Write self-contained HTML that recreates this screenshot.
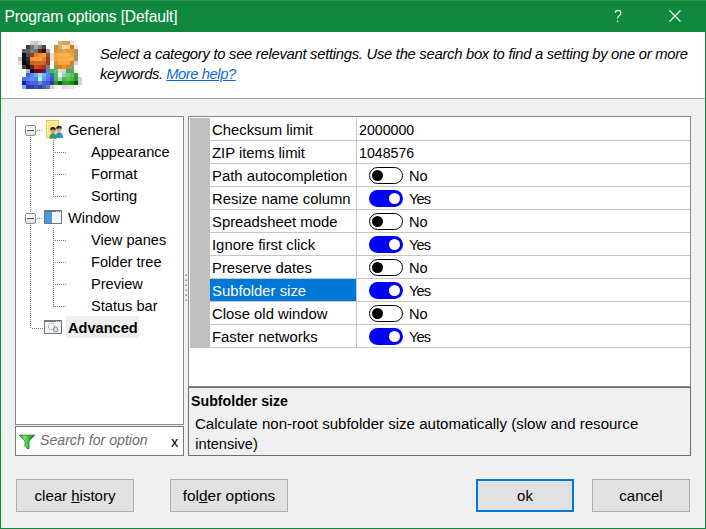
<!DOCTYPE html>
<html><head><meta charset="utf-8">
<style>
*{margin:0;padding:0;box-sizing:border-box}
html,body{width:706px;height:529px;overflow:hidden;background:#f0f0f0;font-family:"Liberation Sans",sans-serif;color:#000}
.a{position:absolute}
.t{position:absolute;white-space:nowrap;font-size:15px;line-height:18px}
#win{position:absolute;left:0;top:0;width:706px;height:529px;border:1px solid #10893e;border-top:none;background:#f0f0f0}
#title{position:absolute;left:0;top:0;width:706px;height:32px;background:#10893e;border-top:1px solid #2b9152}
#hdr{position:absolute;left:1px;top:32px;width:704px;height:67px;background:#fff;border-bottom:1px solid #a0a0a0}
.box{position:absolute;border:1px solid #828790;background:#fff}
.btn{position:absolute;border:1px solid #adadad;background:#e1e1e1;height:33px;font-size:15px;text-align:center;line-height:31px}
.row{position:absolute;left:210px;width:480px;height:1px;background:#c6c6c6}
.lbl{position:absolute;left:212px;font-size:14.85px;white-space:nowrap;line-height:15px}
.val{position:absolute;left:359px;font-size:14.2px;white-space:nowrap;line-height:15px}
.yn{position:absolute;left:409px;font-size:14.6px;white-space:nowrap;line-height:15px}
.tg{position:absolute;left:369px;width:34px;height:17px;border-radius:9px}
.off{border:1.4px solid #000;background:#fff}
.off::after{content:"";position:absolute;left:1.6px;top:1.9px;width:11px;height:11px;border-radius:50%;background:#000}
.on{background:#0000ff}
.on::after{content:"";position:absolute;left:20px;top:3px;width:11px;height:11px;border-radius:50%;background:#fff}
.ti{position:absolute;font-size:14.6px;white-space:nowrap;line-height:15px}
</style></head><body>
<div id="win"></div>
<div id="title"></div>
<div class="t" style="left:4.5px;top:9.2px;color:#fff;font-size:15.6px;letter-spacing:-0.16px;line-height:15px">Program options [Default]</div>
<div id="hdr"></div>
<svg class="a" style="left:18px;top:41px" width="64" height="48" shape-rendering="crispEdges"><rect x="12" y="0" width="4" height="4" fill="#d4d4d4"/><rect x="16" y="0" width="4" height="4" fill="#c4c4c4"/><rect x="20" y="0" width="4" height="4" fill="#e4e4e4"/><rect x="40" y="0" width="4" height="4" fill="#d8b070"/><rect x="44" y="0" width="4" height="4" fill="#d4a860"/><rect x="48" y="0" width="4" height="4" fill="#cca860"/><rect x="52" y="0" width="4" height="4" fill="#e8e8e0"/><rect x="8" y="4" width="4" height="4" fill="#404040"/><rect x="12" y="4" width="4" height="4" fill="#707070"/><rect x="16" y="4" width="4" height="4" fill="#a8a8a8"/><rect x="20" y="4" width="4" height="4" fill="#808080"/><rect x="24" y="4" width="4" height="4" fill="#404848"/><rect x="36" y="4" width="4" height="4" fill="#c09040"/><rect x="40" y="4" width="4" height="4" fill="#d8b070"/><rect x="44" y="4" width="4" height="4" fill="#f8d8a8"/><rect x="48" y="4" width="4" height="4" fill="#f0d0a0"/><rect x="52" y="4" width="4" height="4" fill="#d07818"/><rect x="56" y="4" width="4" height="4" fill="#e8e8e8"/><rect x="4" y="8" width="4" height="4" fill="#606060"/><rect x="8" y="8" width="4" height="4" fill="#606060"/><rect x="12" y="8" width="4" height="4" fill="#808080"/><rect x="16" y="8" width="4" height="4" fill="#5a7a8a"/><rect x="20" y="8" width="4" height="4" fill="#6a2020"/><rect x="24" y="8" width="4" height="4" fill="#400000"/><rect x="28" y="8" width="4" height="4" fill="#a0a0a0"/><rect x="36" y="8" width="4" height="4" fill="#d89830"/><rect x="40" y="8" width="4" height="4" fill="#d0a050"/><rect x="44" y="8" width="4" height="4" fill="#e8a050"/><rect x="48" y="8" width="4" height="4" fill="#f09030"/><rect x="52" y="8" width="4" height="4" fill="#e0a040"/><rect x="56" y="8" width="4" height="4" fill="#b09060"/><rect x="4" y="12" width="4" height="4" fill="#101010"/><rect x="8" y="12" width="4" height="4" fill="#505050"/><rect x="12" y="12" width="4" height="4" fill="#a04010"/><rect x="16" y="12" width="4" height="4" fill="#f07820"/><rect x="20" y="12" width="4" height="4" fill="#f09030"/><rect x="24" y="12" width="4" height="4" fill="#f8a040"/><rect x="28" y="12" width="4" height="4" fill="#a05030"/><rect x="32" y="12" width="4" height="4" fill="#e0e0d8"/><rect x="36" y="12" width="4" height="4" fill="#f8a840"/><rect x="40" y="12" width="4" height="4" fill="#f8b050"/><rect x="44" y="12" width="4" height="4" fill="#f8b050"/><rect x="48" y="12" width="4" height="4" fill="#f8b050"/><rect x="52" y="12" width="4" height="4" fill="#f0a040"/><rect x="56" y="12" width="4" height="4" fill="#b09060"/><rect x="0" y="16" width="4" height="4" fill="#c0c0c0"/><rect x="4" y="16" width="4" height="4" fill="#101010"/><rect x="8" y="16" width="4" height="4" fill="#203040"/><rect x="12" y="16" width="4" height="4" fill="#f09040"/><rect x="16" y="16" width="4" height="4" fill="#f89838"/><rect x="20" y="16" width="4" height="4" fill="#f8a040"/><rect x="24" y="16" width="4" height="4" fill="#e08030"/><rect x="28" y="16" width="4" height="4" fill="#904020"/><rect x="32" y="16" width="4" height="4" fill="#e0e0e0"/><rect x="36" y="16" width="4" height="4" fill="#f8a040"/><rect x="40" y="16" width="4" height="4" fill="#f8b050"/><rect x="44" y="16" width="4" height="4" fill="#f8b050"/><rect x="48" y="16" width="4" height="4" fill="#f8b050"/><rect x="52" y="16" width="4" height="4" fill="#f8b050"/><rect x="56" y="16" width="4" height="4" fill="#a09080"/><rect x="0" y="20" width="4" height="4" fill="#e0e0e0"/><rect x="4" y="20" width="4" height="4" fill="#000000"/><rect x="8" y="20" width="4" height="4" fill="#202020"/><rect x="12" y="20" width="4" height="4" fill="#d06020"/><rect x="16" y="20" width="4" height="4" fill="#d06828"/><rect x="20" y="20" width="4" height="4" fill="#d06828"/><rect x="24" y="20" width="4" height="4" fill="#d06828"/><rect x="28" y="20" width="4" height="4" fill="#904020"/><rect x="36" y="20" width="4" height="4" fill="#e89020"/><rect x="40" y="20" width="4" height="4" fill="#f8a840"/><rect x="44" y="20" width="4" height="4" fill="#f8a840"/><rect x="48" y="20" width="4" height="4" fill="#f8a840"/><rect x="52" y="20" width="4" height="4" fill="#e08010"/><rect x="56" y="20" width="4" height="4" fill="#d0d0d8"/><rect x="4" y="24" width="4" height="4" fill="#404040"/><rect x="8" y="24" width="4" height="4" fill="#000000"/><rect x="12" y="24" width="4" height="4" fill="#602010"/><rect x="16" y="24" width="4" height="4" fill="#c05020"/><rect x="20" y="24" width="4" height="4" fill="#c04818"/><rect x="24" y="24" width="4" height="4" fill="#b03010"/><rect x="28" y="24" width="4" height="4" fill="#808080"/><rect x="36" y="24" width="4" height="4" fill="#80a050"/><rect x="40" y="24" width="4" height="4" fill="#e08010"/><rect x="44" y="24" width="4" height="4" fill="#f09020"/><rect x="48" y="24" width="4" height="4" fill="#e08020"/><rect x="52" y="24" width="4" height="4" fill="#909090"/><rect x="8" y="28" width="4" height="4" fill="#b0b0b0"/><rect x="12" y="28" width="4" height="4" fill="#000050"/><rect x="16" y="28" width="4" height="4" fill="#800000"/><rect x="20" y="28" width="4" height="4" fill="#800010"/><rect x="24" y="28" width="4" height="4" fill="#502070"/><rect x="28" y="28" width="4" height="4" fill="#5090c0"/><rect x="32" y="28" width="4" height="4" fill="#40c040"/><rect x="36" y="28" width="4" height="4" fill="#70c080"/><rect x="40" y="28" width="4" height="4" fill="#e0e0e0"/><rect x="44" y="28" width="4" height="4" fill="#d0d0d0"/><rect x="48" y="28" width="4" height="4" fill="#50a070"/><rect x="52" y="28" width="4" height="4" fill="#50b050"/><rect x="56" y="28" width="4" height="4" fill="#f8e8e8"/><rect x="0" y="32" width="4" height="4" fill="#f0f0f0"/><rect x="8" y="32" width="4" height="4" fill="#4060e0"/><rect x="12" y="32" width="4" height="4" fill="#6080f0"/><rect x="16" y="32" width="4" height="4" fill="#60b0f0"/><rect x="20" y="32" width="4" height="4" fill="#a0d8f8"/><rect x="24" y="32" width="4" height="4" fill="#70b0f0"/><rect x="28" y="32" width="4" height="4" fill="#6080f0"/><rect x="32" y="32" width="4" height="4" fill="#3070c0"/><rect x="36" y="32" width="4" height="4" fill="#50c050"/><rect x="44" y="32" width="4" height="4" fill="#a0d0a0"/><rect x="48" y="32" width="4" height="4" fill="#70d070"/><rect x="52" y="32" width="4" height="4" fill="#60c060"/><rect x="56" y="32" width="4" height="4" fill="#30a030"/><rect x="4" y="36" width="4" height="4" fill="#5070d0"/><rect x="8" y="36" width="4" height="4" fill="#6070f8"/><rect x="12" y="36" width="4" height="4" fill="#6090f0"/><rect x="16" y="36" width="4" height="4" fill="#5080e0"/><rect x="20" y="36" width="4" height="4" fill="#b0f0ff"/><rect x="24" y="36" width="4" height="4" fill="#60a0e0"/><rect x="28" y="36" width="4" height="4" fill="#6070f0"/><rect x="32" y="36" width="4" height="4" fill="#4050e0"/><rect x="36" y="36" width="4" height="4" fill="#40c040"/><rect x="40" y="36" width="4" height="4" fill="#b0d0c0"/><rect x="44" y="36" width="4" height="4" fill="#50b050"/><rect x="48" y="36" width="4" height="4" fill="#60c060"/><rect x="52" y="36" width="4" height="4" fill="#50b050"/><rect x="56" y="36" width="4" height="4" fill="#20a020"/><rect x="60" y="36" width="4" height="4" fill="#d0d0d8"/><rect x="4" y="40" width="4" height="4" fill="#0020c0"/><rect x="8" y="40" width="4" height="4" fill="#4050f0"/><rect x="12" y="40" width="4" height="4" fill="#5060e0"/><rect x="16" y="40" width="4" height="4" fill="#5060e0"/><rect x="20" y="40" width="4" height="4" fill="#6090d0"/><rect x="24" y="40" width="4" height="4" fill="#4060e0"/><rect x="28" y="40" width="4" height="4" fill="#4050e0"/><rect x="32" y="40" width="4" height="4" fill="#2040a0"/><rect x="36" y="40" width="4" height="4" fill="#309030"/><rect x="40" y="40" width="4" height="4" fill="#006000"/><rect x="44" y="40" width="4" height="4" fill="#20a020"/><rect x="48" y="40" width="4" height="4" fill="#20a020"/><rect x="52" y="40" width="4" height="4" fill="#109010"/><rect x="56" y="40" width="4" height="4" fill="#006000"/><rect x="60" y="40" width="4" height="4" fill="#d0d0d8"/><rect x="4" y="44" width="4" height="4" fill="#90a8d0"/><rect x="8" y="44" width="4" height="4" fill="#2040b0"/><rect x="12" y="44" width="4" height="4" fill="#3040b0"/><rect x="16" y="44" width="4" height="4" fill="#4050c0"/><rect x="20" y="44" width="4" height="4" fill="#3040b0"/><rect x="24" y="44" width="4" height="4" fill="#5060b0"/><rect x="28" y="44" width="4" height="4" fill="#6080a0"/><rect x="32" y="44" width="4" height="4" fill="#d0d0d0"/><rect x="36" y="44" width="4" height="4" fill="#f0f0f0"/><rect x="40" y="44" width="4" height="4" fill="#f8f8f8"/><rect x="44" y="44" width="4" height="4" fill="#f0d0e0"/><rect x="48" y="44" width="4" height="4" fill="#f0d8e8"/><rect x="52" y="44" width="4" height="4" fill="#f0e0e0"/></svg>
<div class="t" style="left:100px;top:46.6px;font-size:14.8px;letter-spacing:-0.28px;line-height:15px;font-style:italic">Select a category to see relevant settings. Use the search box to find a setting by one or more</div>
<div class="t" style="left:100px;top:66.6px;font-size:14.8px;letter-spacing:-0.45px;line-height:15px;font-style:italic">keywords. <span style="color:#0a6ad6;text-decoration:underline">More help?</span></div>
<svg class="a" style="left:0;top:0" width="706" height="32"><path d="M615.2 12.6 Q615.6 10.4 618 10.4 Q620.8 10.4 620.8 13 Q620.8 14.8 618.6 16.2 Q617.6 17 617.6 18.6" stroke="#fff" stroke-width="1.15" fill="none"/><circle cx="617.6" cy="21.2" r="0.8" fill="#fff"/><path d="M669.5 10.5 L680.5 21.5 M680.5 10.5 L669.5 21.5" stroke="#fff" stroke-width="1.1" fill="none"/></svg>


<!-- tree box -->
<div class="box" style="left:15px;top:116px;width:169px;height:309px"></div>
<svg class="a" style="left:0;top:0" width="200" height="340" shape-rendering="crispEdges"><g fill="#7c7c7c"><rect x="30" y="137" width="1" height="1"/><rect x="30" y="139" width="1" height="1"/><rect x="30" y="141" width="1" height="1"/><rect x="30" y="143" width="1" height="1"/><rect x="30" y="145" width="1" height="1"/><rect x="30" y="147" width="1" height="1"/><rect x="30" y="149" width="1" height="1"/><rect x="30" y="151" width="1" height="1"/><rect x="30" y="153" width="1" height="1"/><rect x="30" y="155" width="1" height="1"/><rect x="30" y="157" width="1" height="1"/><rect x="30" y="159" width="1" height="1"/><rect x="30" y="161" width="1" height="1"/><rect x="30" y="163" width="1" height="1"/><rect x="30" y="165" width="1" height="1"/><rect x="30" y="167" width="1" height="1"/><rect x="30" y="169" width="1" height="1"/><rect x="30" y="171" width="1" height="1"/><rect x="30" y="173" width="1" height="1"/><rect x="30" y="175" width="1" height="1"/><rect x="30" y="177" width="1" height="1"/><rect x="30" y="179" width="1" height="1"/><rect x="30" y="181" width="1" height="1"/><rect x="30" y="183" width="1" height="1"/><rect x="30" y="185" width="1" height="1"/><rect x="30" y="187" width="1" height="1"/><rect x="30" y="189" width="1" height="1"/><rect x="30" y="191" width="1" height="1"/><rect x="30" y="193" width="1" height="1"/><rect x="30" y="195" width="1" height="1"/><rect x="30" y="197" width="1" height="1"/><rect x="30" y="199" width="1" height="1"/><rect x="30" y="201" width="1" height="1"/><rect x="30" y="203" width="1" height="1"/><rect x="30" y="205" width="1" height="1"/><rect x="30" y="207" width="1" height="1"/><rect x="30" y="209" width="1" height="1"/><rect x="30" y="211" width="1" height="1"/><rect x="30" y="225" width="1" height="1"/><rect x="30" y="227" width="1" height="1"/><rect x="30" y="229" width="1" height="1"/><rect x="30" y="231" width="1" height="1"/><rect x="30" y="233" width="1" height="1"/><rect x="30" y="235" width="1" height="1"/><rect x="30" y="237" width="1" height="1"/><rect x="30" y="239" width="1" height="1"/><rect x="30" y="241" width="1" height="1"/><rect x="30" y="243" width="1" height="1"/><rect x="30" y="245" width="1" height="1"/><rect x="30" y="247" width="1" height="1"/><rect x="30" y="249" width="1" height="1"/><rect x="30" y="251" width="1" height="1"/><rect x="30" y="253" width="1" height="1"/><rect x="30" y="255" width="1" height="1"/><rect x="30" y="257" width="1" height="1"/><rect x="30" y="259" width="1" height="1"/><rect x="30" y="261" width="1" height="1"/><rect x="30" y="263" width="1" height="1"/><rect x="30" y="265" width="1" height="1"/><rect x="30" y="267" width="1" height="1"/><rect x="30" y="269" width="1" height="1"/><rect x="30" y="271" width="1" height="1"/><rect x="30" y="273" width="1" height="1"/><rect x="30" y="275" width="1" height="1"/><rect x="30" y="277" width="1" height="1"/><rect x="30" y="279" width="1" height="1"/><rect x="30" y="281" width="1" height="1"/><rect x="30" y="283" width="1" height="1"/><rect x="30" y="285" width="1" height="1"/><rect x="30" y="287" width="1" height="1"/><rect x="30" y="289" width="1" height="1"/><rect x="30" y="291" width="1" height="1"/><rect x="30" y="293" width="1" height="1"/><rect x="30" y="295" width="1" height="1"/><rect x="30" y="297" width="1" height="1"/><rect x="30" y="299" width="1" height="1"/><rect x="30" y="301" width="1" height="1"/><rect x="30" y="303" width="1" height="1"/><rect x="30" y="305" width="1" height="1"/><rect x="30" y="307" width="1" height="1"/><rect x="30" y="309" width="1" height="1"/><rect x="30" y="311" width="1" height="1"/><rect x="30" y="313" width="1" height="1"/><rect x="30" y="315" width="1" height="1"/><rect x="30" y="317" width="1" height="1"/><rect x="30" y="319" width="1" height="1"/><rect x="30" y="321" width="1" height="1"/><rect x="30" y="323" width="1" height="1"/><rect x="30" y="325" width="1" height="1"/><rect x="30" y="327" width="1" height="1"/><rect x="37" y="130" width="1" height="1"/><rect x="39" y="130" width="1" height="1"/><rect x="41" y="130" width="1" height="1"/><rect x="37" y="218" width="1" height="1"/><rect x="39" y="218" width="1" height="1"/><rect x="41" y="218" width="1" height="1"/><rect x="32" y="328" width="1" height="1"/><rect x="34" y="328" width="1" height="1"/><rect x="36" y="328" width="1" height="1"/><rect x="38" y="328" width="1" height="1"/><rect x="40" y="328" width="1" height="1"/><rect x="42" y="328" width="1" height="1"/><rect x="53" y="140" width="1" height="1"/><rect x="53" y="142" width="1" height="1"/><rect x="53" y="144" width="1" height="1"/><rect x="53" y="146" width="1" height="1"/><rect x="53" y="148" width="1" height="1"/><rect x="53" y="150" width="1" height="1"/><rect x="53" y="152" width="1" height="1"/><rect x="53" y="154" width="1" height="1"/><rect x="53" y="156" width="1" height="1"/><rect x="53" y="158" width="1" height="1"/><rect x="53" y="160" width="1" height="1"/><rect x="53" y="162" width="1" height="1"/><rect x="53" y="164" width="1" height="1"/><rect x="53" y="166" width="1" height="1"/><rect x="53" y="168" width="1" height="1"/><rect x="53" y="170" width="1" height="1"/><rect x="53" y="172" width="1" height="1"/><rect x="53" y="174" width="1" height="1"/><rect x="53" y="176" width="1" height="1"/><rect x="53" y="178" width="1" height="1"/><rect x="53" y="180" width="1" height="1"/><rect x="53" y="182" width="1" height="1"/><rect x="53" y="184" width="1" height="1"/><rect x="53" y="186" width="1" height="1"/><rect x="53" y="188" width="1" height="1"/><rect x="53" y="190" width="1" height="1"/><rect x="53" y="192" width="1" height="1"/><rect x="53" y="194" width="1" height="1"/><rect x="53" y="196" width="1" height="1"/><rect x="55" y="152" width="1" height="1"/><rect x="57" y="152" width="1" height="1"/><rect x="59" y="152" width="1" height="1"/><rect x="61" y="152" width="1" height="1"/><rect x="63" y="152" width="1" height="1"/><rect x="65" y="152" width="1" height="1"/><rect x="55" y="174" width="1" height="1"/><rect x="57" y="174" width="1" height="1"/><rect x="59" y="174" width="1" height="1"/><rect x="61" y="174" width="1" height="1"/><rect x="63" y="174" width="1" height="1"/><rect x="65" y="174" width="1" height="1"/><rect x="55" y="196" width="1" height="1"/><rect x="57" y="196" width="1" height="1"/><rect x="59" y="196" width="1" height="1"/><rect x="61" y="196" width="1" height="1"/><rect x="63" y="196" width="1" height="1"/><rect x="65" y="196" width="1" height="1"/><rect x="53" y="228" width="1" height="1"/><rect x="53" y="230" width="1" height="1"/><rect x="53" y="232" width="1" height="1"/><rect x="53" y="234" width="1" height="1"/><rect x="53" y="236" width="1" height="1"/><rect x="53" y="238" width="1" height="1"/><rect x="53" y="240" width="1" height="1"/><rect x="53" y="242" width="1" height="1"/><rect x="53" y="244" width="1" height="1"/><rect x="53" y="246" width="1" height="1"/><rect x="53" y="248" width="1" height="1"/><rect x="53" y="250" width="1" height="1"/><rect x="53" y="252" width="1" height="1"/><rect x="53" y="254" width="1" height="1"/><rect x="53" y="256" width="1" height="1"/><rect x="53" y="258" width="1" height="1"/><rect x="53" y="260" width="1" height="1"/><rect x="53" y="262" width="1" height="1"/><rect x="53" y="264" width="1" height="1"/><rect x="53" y="266" width="1" height="1"/><rect x="53" y="268" width="1" height="1"/><rect x="53" y="270" width="1" height="1"/><rect x="53" y="272" width="1" height="1"/><rect x="53" y="274" width="1" height="1"/><rect x="53" y="276" width="1" height="1"/><rect x="53" y="278" width="1" height="1"/><rect x="53" y="280" width="1" height="1"/><rect x="53" y="282" width="1" height="1"/><rect x="53" y="284" width="1" height="1"/><rect x="53" y="286" width="1" height="1"/><rect x="53" y="288" width="1" height="1"/><rect x="53" y="290" width="1" height="1"/><rect x="53" y="292" width="1" height="1"/><rect x="53" y="294" width="1" height="1"/><rect x="53" y="296" width="1" height="1"/><rect x="53" y="298" width="1" height="1"/><rect x="53" y="300" width="1" height="1"/><rect x="53" y="302" width="1" height="1"/><rect x="53" y="304" width="1" height="1"/><rect x="53" y="306" width="1" height="1"/><rect x="55" y="240" width="1" height="1"/><rect x="57" y="240" width="1" height="1"/><rect x="59" y="240" width="1" height="1"/><rect x="61" y="240" width="1" height="1"/><rect x="63" y="240" width="1" height="1"/><rect x="65" y="240" width="1" height="1"/><rect x="55" y="262" width="1" height="1"/><rect x="57" y="262" width="1" height="1"/><rect x="59" y="262" width="1" height="1"/><rect x="61" y="262" width="1" height="1"/><rect x="63" y="262" width="1" height="1"/><rect x="65" y="262" width="1" height="1"/><rect x="55" y="284" width="1" height="1"/><rect x="57" y="284" width="1" height="1"/><rect x="59" y="284" width="1" height="1"/><rect x="61" y="284" width="1" height="1"/><rect x="63" y="284" width="1" height="1"/><rect x="65" y="284" width="1" height="1"/><rect x="55" y="306" width="1" height="1"/><rect x="57" y="306" width="1" height="1"/><rect x="59" y="306" width="1" height="1"/><rect x="61" y="306" width="1" height="1"/><rect x="63" y="306" width="1" height="1"/><rect x="65" y="306" width="1" height="1"/></g><rect x="25.5" y="125.5" width="10" height="10" rx="1.5" fill="url(#eg)" stroke="#8c8c8c" stroke-width="1" shape-rendering="geometricPrecision"/><rect x="27" y="130" width="7" height="1" fill="#3c50a8"/><rect x="25.5" y="213.5" width="10" height="10" rx="1.5" fill="url(#eg)" stroke="#8c8c8c" stroke-width="1" shape-rendering="geometricPrecision"/><rect x="27" y="218" width="7" height="1" fill="#3c50a8"/><defs><linearGradient id="eg" x1="0" y1="0" x2="0" y2="1"><stop offset="0.55" stop-color="#fff"/><stop offset="0.56" stop-color="#e3e5e5"/><stop offset="1" stop-color="#e3e5e5"/></linearGradient></defs>
<g shape-rendering="geometricPrecision">
<rect x="46.5" y="120.5" width="12" height="17" fill="#fde48c" stroke="#f0c43c"/>
<rect x="47.5" y="121.5" width="10" height="15" fill="none" stroke="#fff3c0" stroke-width="0.8"/>
<path d="M55.4 138 Q55.4 132.2 59.2 132.2 Q63 132.2 63 138 Z" fill="#3a8fd0"/>
<circle cx="59" cy="129.2" r="2.5" fill="#d4aa80"/>
<path d="M56.3 129 Q56 125.6 59 125.8 Q62 125.6 61.8 129 Q60.5 127.6 56.3 129Z" fill="#262626"/>
<path d="M49.3 138.8 Q49.3 133.2 53 133.2 Q56.7 133.2 56.7 138.8 Z" fill="#3c9a58"/>
<circle cx="53" cy="130.4" r="2.5" fill="#c89a70"/>
<path d="M50.3 130.2 Q50 126.8 53 127 Q56 126.8 55.8 130.2 Q54.5 128.8 50.3 130.2Z" fill="#262626"/>
</g><rect x="44" y="210" width="18" height="14" fill="#6e7680"/>
<rect x="45" y="212" width="7" height="11" fill="#4a98e0"/>
<rect x="52" y="212" width="9" height="11" fill="#f4f4f4"/>
<rect x="56" y="211" width="1" height="1" fill="#d8d8d8"/><rect x="58" y="211" width="1" height="1" fill="#d8d8d8"/><rect x="60" y="211" width="1" height="1" fill="#d8d8d8"/><rect x="66" y="316" width="73" height="22" fill="#efefef"/>
<rect x="44" y="320" width="18" height="14" fill="#6e7680"/>
<rect x="45" y="322" width="16" height="11" fill="#f4f4f4"/>
<rect x="56" y="321" width="1" height="1" fill="#d8d8d8"/><rect x="58" y="321" width="1" height="1" fill="#d8d8d8"/><rect x="60" y="321" width="1" height="1" fill="#d8d8d8"/>
<g shape-rendering="geometricPrecision">
<circle cx="51.5" cy="326.5" r="3.2" fill="none" stroke="#8a9090" stroke-width="1" stroke-dasharray="1.2 0.8"/>
<circle cx="55.5" cy="329.5" r="2.4" fill="#bfe0f5" stroke="#7a8890" stroke-width="0.9"/>
</g></svg>
<div class="ti" style="left:68px;top:123.44px">General</div>
<div class="ti" style="left:91px;top:145.44px">Appearance</div>
<div class="ti" style="left:91px;top:167.44px">Format</div>
<div class="ti" style="left:91px;top:189.44px">Sorting</div>
<div class="ti" style="left:68px;top:211.44px">Window</div>
<div class="ti" style="left:91px;top:233.44px">View panes</div>
<div class="ti" style="left:91px;top:255.44px">Folder tree</div>
<div class="ti" style="left:91px;top:277.44px">Preview</div>
<div class="ti" style="left:91px;top:299.44px">Status bar</div>
<div class="ti" style="left:68px;top:321.44px;font-weight:bold">Advanced</div>
<!-- search box -->
<div class="box" style="left:15px;top:426px;width:169px;height:30px;border-color:#7a7a7a"></div>
<svg class="a" style="left:0;top:0" width="200" height="460"><defs><linearGradient id="fg" x1="0" y1="0" x2="1" y2="0"><stop offset="0" stop-color="#30b030"/><stop offset="0.35" stop-color="#78e078"/><stop offset="0.7" stop-color="#30a830"/><stop offset="1" stop-color="#0a700a"/></linearGradient></defs>
<path d="M19.2 435.2 L34.8 435.2 L29 441 L29 448.8 L27.5 448.8 L25 446.3 L25 441 Z" fill="url(#fg)" stroke="#139013" stroke-width="0.9" stroke-linejoin="round"/></svg>
<div class="t" style="left:40px;top:432.5px;font-size:14.15px;line-height:15px;font-style:italic;color:#6d6d6d">Search for option</div>
<div class="t" style="left:171px;top:435px;font-size:14.6px;line-height:15px">x</div>

<svg class="a" style="left:184px;top:272px" width="4" height="32" shape-rendering="crispEdges"><rect x="1" y="2" width="1" height="1" fill="#d8d8d8"/><rect x="2" y="2" width="1" height="1" fill="#b4b4b4"/><rect x="1" y="3" width="1" height="1" fill="#b4b4b4"/><rect x="2" y="3" width="1" height="1" fill="#8c8c8c"/><rect x="1" y="7" width="1" height="1" fill="#d8d8d8"/><rect x="2" y="7" width="1" height="1" fill="#b4b4b4"/><rect x="1" y="8" width="1" height="1" fill="#b4b4b4"/><rect x="2" y="8" width="1" height="1" fill="#8c8c8c"/><rect x="1" y="12" width="1" height="1" fill="#d8d8d8"/><rect x="2" y="12" width="1" height="1" fill="#b4b4b4"/><rect x="1" y="13" width="1" height="1" fill="#b4b4b4"/><rect x="2" y="13" width="1" height="1" fill="#8c8c8c"/><rect x="1" y="17" width="1" height="1" fill="#d8d8d8"/><rect x="2" y="17" width="1" height="1" fill="#b4b4b4"/><rect x="1" y="18" width="1" height="1" fill="#b4b4b4"/><rect x="2" y="18" width="1" height="1" fill="#8c8c8c"/><rect x="1" y="22" width="1" height="1" fill="#d8d8d8"/><rect x="2" y="22" width="1" height="1" fill="#b4b4b4"/><rect x="1" y="23" width="1" height="1" fill="#b4b4b4"/><rect x="2" y="23" width="1" height="1" fill="#8c8c8c"/><rect x="1" y="27" width="1" height="1" fill="#d8d8d8"/><rect x="2" y="27" width="1" height="1" fill="#b4b4b4"/><rect x="1" y="28" width="1" height="1" fill="#b4b4b4"/><rect x="2" y="28" width="1" height="1" fill="#8c8c8c"/></svg>
<!-- grid box -->
<div class="box" style="left:188px;top:116px;width:503px;height:271px"></div>
<div class="a" style="left:190px;top:118px;width:20px;height:230px;background:#c0c0c0"></div>

<div class="lbl" style="top:123px">Checksum limit</div>
<div class="row" style="top:140px"></div>
<div class="val" style="top:123px">2000000</div>
<div class="lbl" style="top:146px">ZIP items limit</div>
<div class="row" style="top:163px"></div>
<div class="val" style="top:146px">1048576</div>
<div class="lbl" style="top:169px">Path autocompletion</div>
<div class="row" style="top:186px"></div>
<div class="tg off" style="top:167px"></div>
<div class="yn" style="top:169px">No</div>
<div class="lbl" style="top:192px">Resize name column</div>
<div class="row" style="top:209px"></div>
<div class="tg on" style="top:190px"></div>
<div class="yn" style="top:192px;letter-spacing:-0.9px">Yes</div>
<div class="lbl" style="top:215px">Spreadsheet mode</div>
<div class="row" style="top:232px"></div>
<div class="tg off" style="top:213px"></div>
<div class="yn" style="top:215px">No</div>
<div class="lbl" style="top:238px">Ignore first click</div>
<div class="row" style="top:255px"></div>
<div class="tg on" style="top:236px"></div>
<div class="yn" style="top:238px;letter-spacing:-0.9px">Yes</div>
<div class="lbl" style="top:261px">Preserve dates</div>
<div class="row" style="top:278px"></div>
<div class="tg off" style="top:259px"></div>
<div class="yn" style="top:261px">No</div>
<div class="a" style="left:210px;top:279px;width:146px;height:22px;background:#0078d7"></div>
<div class="lbl" style="top:284px;color:#fff">Subfolder size</div>
<div class="row" style="top:301px"></div>
<div class="tg on" style="top:282px"></div>
<div class="yn" style="top:284px;letter-spacing:-0.9px">Yes</div>
<div class="lbl" style="top:307px">Close old window</div>
<div class="row" style="top:324px"></div>
<div class="tg off" style="top:305px"></div>
<div class="yn" style="top:307px">No</div>
<div class="lbl" style="top:330px">Faster networks</div>
<div class="row" style="top:347px"></div>
<div class="tg on" style="top:328px"></div>
<div class="yn" style="top:330px;letter-spacing:-0.9px">Yes</div>
<div class="a" style="left:356px;top:118px;width:1px;height:230px;background:#c6c6c6"></div>
<!-- description -->
<div class="a" style="left:188px;top:387px;width:503px;height:69px;border:1px solid #6d6d6d;background:#f0f0f0"></div>

<div class="t" style="left:191px;top:394px;font-size:14.2px;line-height:15px;font-weight:bold">Subfolder size</div>
<div class="t" style="left:195px;top:415.6px;font-size:15.05px;line-height:15px">Calculate non-root subfolder size automatically (slow and resource</div>
<div class="t" style="left:195.3px;top:437px;font-size:14.6px;line-height:15px">intensive)</div>
<!-- buttons -->
<div class="btn" style="left:16px;top:479px;width:118px">clear <u>h</u>istory</div>
<div class="btn" style="left:170px;top:479px;width:118px;font-size:15.4px">fol<u>d</u>er options</div>
<div class="btn" style="left:476px;top:479px;width:98px;border:2px solid #0078d7;line-height:29px">ok</div>
<div class="btn" style="left:592px;top:479px;width:98px">cancel</div>
</body></html>
